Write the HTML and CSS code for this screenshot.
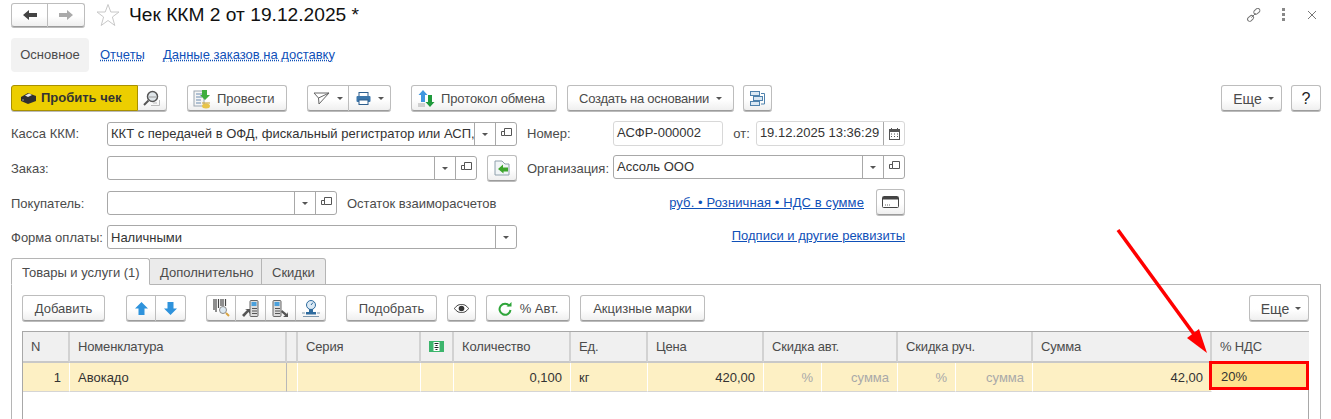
FILE: index.html
```html
<!DOCTYPE html>
<html lang="ru">
<head>
<meta charset="utf-8">
<title>Чек ККМ 2</title>
<link rel="stylesheet" href="styles.css">
</head>
<body>
<svg class="defs" width="0" height="0" aria-hidden="true">
  <symbol id="open" viewBox="0 0 11 11"><path d="M3.500 7.500H.5V3.500H3.500M3.500 .5h7v7h-7z" fill="none" stroke="#555" stroke-width="1"/></symbol>
</svg>
<div class="page">
  <header class="titlebar">
    <div class="btn-group nav">
      <button class="btn seg"><svg width="14" height="10" viewBox="0 0 14 10"><path d="M0 5 6 0V3H14V7H6V10z" fill="#444"/></svg></button>
      <button class="btn seg"><svg width="14" height="10" viewBox="0 0 14 10"><path d="M14 5 8 0V3H0V7H8V10z" fill="#aaa"/></svg></button>
    </div>
    <svg class="star" width="24" height="24" viewBox="0 0 24 24"><path d="M12 1.500 14.800 9H23L16.400 14 18.800 22.500 12 17.500 5.200 22.500 7.600 14 1 9H9.200z" fill="none" stroke="#c8c8c8"/></svg>
    <h1 class="title">Чек ККМ 2 от 19.12.2025 *</h1>
    <div class="window-tools">
      <svg width="15" height="15" viewBox="0 0 18 18"><g fill="none" stroke="#777" stroke-width="1.200"><rect x="9" y="1.500" width="8" height="5" rx="2.500" transform="rotate(-42 13 4)"/><rect x="1.500" y="10" width="8" height="5" rx="2.500" transform="rotate(-42 5.500 12.500)"/><path d="M6.500 11.500 11.500 6.500"/></g></svg>
      <svg width="4" height="14" viewBox="0 0 4 14"><g fill="#888"><rect x="0" y="0" width="3" height="3"/><rect x="0" y="5" width="3" height="3"/><rect x="0" y="10" width="3" height="3"/></g></svg>
      <svg width="10" height="10" viewBox="0 0 10 10"><path d="M1 1 9 9M9 1 1 9" stroke="#777" fill="none"/></svg>
    </div>
  </header>

  <nav class="pages">
    <span class="page-tab active">Основное</span>
    <a class="page-tab link">Отчеты</a>
    <a class="page-tab link">Данные заказов на доставку</a>
  </nav>

  <div class="toolbar main-toolbar">
    <div class="btn-group">
      <button class="btn primary"><svg width="17" height="12" viewBox="0 0 17 12"><path d="M1 5 8 1 16 4V9L8 12 1 9z" fill="#2f2f2f"/><path d="M5 3.500 9 1.500 12 3 8 5z" fill="#e8e8e8"/><circle cx="3" cy="8" r="1" fill="#777"/></svg>Пробить чек</button>
      <button class="btn seg search"><svg width="18" height="18" viewBox="0 0 18 18"><path d="M8 15.500H16.500V10" fill="none" stroke="#bbb"/><path d="M10 13h4" stroke="#bbb"/><circle cx="9.500" cy="6.500" r="5" fill="#dfe6ea" stroke="#555" stroke-width="1.500"/><path d="M6 7H13" stroke="#999"/><path d="M5.500 10.500 1 15" stroke="#555" stroke-width="2"/></svg></button>
    </div>
    <button class="btn w100"><svg width="19" height="20" viewBox="0 0 19 20"><rect x="1" y="2" width="10" height="15" fill="#f5f5f5" stroke="#9aa5b0"/><path d="M3 5h6M3 8h6M3 11h5M3 14h5" stroke="#6a8cb0"/><path d="M9 1h5v5h3l-5 5-5-5h2z" fill="#3fae3f"/><ellipse cx="13" cy="17" rx="4" ry="2.500" fill="#e8c44a"/><path d="M9 14h8" stroke="#c9a02a"/></svg>Провести</button>
    <div class="btn-group">
      <button class="btn seg split"><svg width="17" height="13" viewBox="0 0 17 13"><path d="M1 1H16L6 12 5.500 6z M5.500 6 16 1" fill="none" stroke="#666"/></svg><i class="caret"></i></button>
      <button class="btn seg split"><svg width="15" height="13" viewBox="0 0 15 13"><rect x="3" y="0.500" width="9" height="4" fill="#fff" stroke="#2e5f8e"/><rect x="0.500" y="4" width="14" height="6" rx="1" fill="#3d77ab"/><rect x="3" y="8" width="9" height="4.500" fill="#fff" stroke="#2e5f8e"/></svg><i class="caret"></i></button>
    </div>
    <button class="btn proto"><svg width="17" height="17" viewBox="0 0 17 17"><path d="M5 0 9.500 5H7V12H3V5H.5z" fill="#3f97e0"/><path d="M12 17 7.500 12H10V5H14V12H16.500z" fill="#1f9a3c"/><path d="M0 14H7M0 16H7" stroke="#aaa"/></svg>Протокол обмена</button>
    <button class="btn create">Создать на основании<i class="caret"></i></button>
    <button class="btn icon-btn"><svg width="15" height="15" viewBox="0 0 15 15"><g fill="#dbe8f3" stroke="#4f82ad"><rect x="0.500" y="0.500" width="9" height="4"/><rect x="3.500" y="5.500" width="9" height="4"/><rect x="0.500" y="10.500" width="9" height="4"/></g><path d="M11 2.500H14.500V13H11" fill="none" stroke="#4f82ad"/></svg></button>
    <div class="spacer"></div>
    <button class="btn more">Еще<i class="caret"></i></button>
    <button class="btn help">?</button>
  </div>

  <section class="form">
    <div class="form-left">
      <div class="row r1">
        <label class="lbl">Касса ККМ:</label>
        <div class="field w410"><span class="value">ККТ с передачей в ОФД, фискальный регистратор или АСП,</span><span class="fbtn"><i class="caret"></i></span><span class="fbtn"><svg class="open"><use href="#open"/></svg></span></div>
      </div>
      <div class="row r2">
        <label class="lbl">Заказ:</label>
        <div class="field w370"><span class="value"></span><span class="fbtn"><i class="caret"></i></span><span class="fbtn"><svg class="open"><use href="#open"/></svg></span></div>
        <button class="btn back"><svg width="17" height="16" viewBox="0 0 17 16"><path d="M1 1H8L11 4H15V15H1z" fill="#f1f5f7" stroke="#8fa0ac"/><path d="M4 9 9 4.500V7.500H14V11.500H9.500V13.500z" fill="#3da52c"/></svg></button>
      </div>
      <div class="row r3">
        <label class="lbl">Покупатель:</label>
        <div class="field w230"><span class="value"></span><span class="fbtn"><i class="caret"></i></span><span class="fbtn"><svg class="open"><use href="#open"/></svg></span></div>
        <span class="balance">Остаток взаиморасчетов</span>
      </div>
      <div class="row r4">
        <label class="lbl">Форма оплаты:</label>
        <div class="field w410"><span class="value">Наличными</span><span class="fbtn"><i class="caret"></i></span></div>
      </div>
    </div>
    <div class="form-right">
      <div class="row rr1">
        <label class="lbl lbl-r">Номер:</label>
        <div class="field readonly w110"><span class="value">АСФР-000002</span></div>
        <label class="lbl lbl-from">от:</label>
        <div class="field readonly w150"><span class="value">19.12.2025 13:36:29</span><span class="fbtn"><svg width="11" height="12" viewBox="0 0 11 12"><rect x=".5" y="1.500" width="10" height="10" fill="none" stroke="#555"/><rect x="1" y="2" width="9" height="2" fill="#555"/><path d="M2.500 0V2M8.500 0V2M2 6h1M5 6h1M8 6h1M2 8.500h1M5 8.500h1M8 8.500h1" stroke="#555"/></svg></span></div>
      </div>
      <div class="row rr2">
        <label class="lbl lbl-r">Организация:</label>
        <div class="field w292"><span class="value">Ассоль ООО</span><span class="fbtn"><i class="caret"></i></span><span class="fbtn"><svg class="open"><use href="#open"/></svg></span></div>
      </div>
      <div class="row rr3">
        <a class="link">руб. • Розничная • НДС в сумме</a>
        <button class="btn card"><svg width="17" height="12" viewBox="0 0 17 12"><rect x=".5" y=".5" width="16" height="11" rx="1" fill="#fff" stroke="#444"/><rect x="1" y="1" width="15" height="2.500" fill="#444"/><path d="M3 9h1M5 9h1M7 9h1" stroke="#666"/></svg></button>
      </div>
      <div class="row rr4"><a class="link">Подписи и другие реквизиты</a></div>
    </div>
  </section>

  <div class="tabs">
    <span class="tab active">Товары и услуги (1)</span>
    <span class="tab t2">Дополнительно</span>
    <span class="tab t3">Скидки</span>
  </div>

  <section class="panel">
    <div class="toolbar panel-toolbar">
      <button class="btn add">Добавить</button>
      <div class="btn-group">
        <button class="btn seg small"><svg width="13" height="13" viewBox="0 0 13 13"><path d="M6.500 0 13 6.500H9.500V13H3.500V6.500H0z" fill="#2f93dc"/></svg></button>
        <button class="btn seg small"><svg width="13" height="13" viewBox="0 0 13 13"><path d="M6.500 13 13 6.500H9.500V0H3.500V6.500H0z" fill="#2f93dc"/></svg></button>
      </div>
      <div class="btn-group">
        <button class="btn seg small"><svg width="17" height="19" viewBox="0 0 17 19"><path d="M1 0V11M3 0V13M5.500 0V9M8 0V7M10 0V7M12.500 0V7" stroke="#444" stroke-width="1.200"/><circle cx="10" cy="11" r="3.500" fill="#dce9f2" stroke="#8a8a8a"/><path d="M13 14 16 17" stroke="#d9a441" stroke-width="2"/></svg></button>
        <button class="btn seg small"><svg width="17" height="18" viewBox="0 0 17 18"><rect x="8" y="0.500" width="8" height="16" rx="1" fill="#ddd" stroke="#666"/><rect x="9.500" y="2" width="5" height="4" fill="#4aa0dc"/><path d="M10 8.500h5M10 11h5M10 13.500h5" stroke="#555"/><path d="M0 15 5 10 3 9H8V14L6.500 12 2 17z" fill="#555"/></svg></button>
        <button class="btn seg small"><svg width="17" height="18" viewBox="0 0 17 18"><rect x="1" y="0.500" width="8" height="16" rx="1" fill="#ddd" stroke="#666"/><rect x="2.500" y="2" width="5" height="4" fill="#4aa0dc"/><path d="M3 8.500h5M3 11h5M3 13.500h5" stroke="#555"/><path d="M10 10 15 14 16 12V17H11L13 15.500 9 12z" fill="#555"/></svg></button>
        <button class="btn seg small"><svg width="18" height="18" viewBox="0 0 18 18"><circle cx="9" cy="5" r="4.500" fill="#dbe9f4" stroke="#2e6b9e"/><path d="M9 5 11 2.500" stroke="#2e6b9e"/><rect x="7" y="9" width="4" height="3" fill="#2e6b9e"/><rect x="4" y="12" width="10" height="2.500" fill="#2e6b9e"/><path d="M0 13H3M15 13H18M1 16.500H17" stroke="#7e98ad"/></svg></button>
      </div>
      <button class="btn pick">Подобрать</button>
      <button class="btn eye"><svg width="15" height="9" viewBox="0 0 15 9"><path d="M.5 4.500C3 1 5 .5 7.500 .5S12 1 14.500 4.500C12 8 10 8.500 7.500 8.500S3 8 .5 4.500z" fill="#fff" stroke="#333"/><circle cx="7.500" cy="4.500" r="2.800" fill="#333"/></svg></button>
      <button class="btn auto"><svg width="14" height="14" viewBox="0 0 14 14"><path d="M11.500 4A5.500 5.500 0 1 0 12.500 8" fill="none" stroke="#2fa53a" stroke-width="2"/><path d="M8.500 4.500H13.500V0z" fill="#2fa53a"/></svg>% Авт.</button>
      <button class="btn excise">Акцизные марки</button>
      <div class="spacer"></div>
      <button class="btn more2">Еще<i class="caret"></i></button>
    </div>

    <div class="grid-wrap">
      <div class="grid">
        <div class="th">N</div>
        <div class="th">Номенклатура</div>
        <div class="th narrow"></div>
        <div class="th">Серия</div>
        <div class="th mark"><svg width="15" height="11" viewBox="0 0 15 11"><rect width="15" height="11" fill="#3cb56c"/><rect x="4.500" y="1" width="6" height="9" fill="#fff"/><path d="M5.500 2.500h4M6.500 4.500h2M5.500 6.500h4M6.500 8.500h2" stroke="#222" stroke-width="1.200"/></svg></div>
        <div class="th">Количество</div>
        <div class="th">Ед.</div>
        <div class="th">Цена</div>
        <div class="th span2">Скидка авт.</div>
        <div class="th span2">Скидка руч.</div>
        <div class="th">Сумма</div>
        <div class="th">% НДС</div>

        <div class="td num">1</div>
        <div class="td name">Авокадо</div>
        <div class="td narrow"></div>
        <div class="td"></div>
        <div class="td"></div>
        <div class="td num">0,100</div>
        <div class="td">кг</div>
        <div class="td num">420,00</div>
        <div class="td num hint">%</div>
        <div class="td num hint">сумма</div>
        <div class="td num hint">%</div>
        <div class="td num hint">сумма</div>
        <div class="td num">42,00</div>
        <div class="td current">20%</div>
      </div>
    </div>
  </section>

  <svg class="arrow" width="110" height="140" viewBox="0 0 110 140"><path d="M3 2 81 109" stroke="#f00" stroke-width="3.500" fill="none"/><path d="M92 125 72 110 84 101z" fill="#f00"/></svg>
</div>
</body>
</html>
```
FILE: styles.css
```css
* { box-sizing: border-box; }
html, body { margin: 0; height: 419px; overflow: hidden; background: #fff; }
body { font: 13px/16px "Liberation Sans", Arial, sans-serif; color: #4b4b4b; }
.defs { position: absolute; }
.page { position: relative; width: 1331px; height: 419px; padding: 3px 10px 0 11px; overflow: hidden; }

.titlebar { display: flex; align-items: center; height: 24px; }
.title { margin: 0 0 0 9px; font-size: 19.2px; font-weight: 400; line-height: 24px; color: #111; }
.star { margin-left: 11px; }
.window-tools { margin-left: auto; display: flex; align-items: center; gap: 21px; padding-right: 4px; }

.btn { display: inline-flex; align-items: center; justify-content: center; height: 26px; padding: 0 12px; gap: 8px;
  font: inherit; color: #4b4b4b; background: linear-gradient(#fff 55%, #efefef); border: 1px solid #bdbdbd; border-bottom-color: #9c9c9c; border-radius: 3px; box-shadow: 0 1px 0 #bbb; }
.toolbar .btn { padding-top: 1px; }
.btn-group { display: inline-flex; }
.btn-group .btn { border-radius: 0; border-left-width: 0; }
.btn-group .btn:first-child { border-radius: 3px 0 0 3px; border-left-width: 1px; }
.btn-group .btn:last-child { border-radius: 0 3px 3px 0; }
.seg { padding: 0; }
.nav { height: 24px; }
.nav .btn { width: 37px; height: 24px; }
.caret { display: inline-block; width: 0; height: 0; border: 3px solid transparent; border-top: 3px solid #555; border-bottom: 0; }

.pages { display: flex; align-items: center; height: 34px; margin-top: 11px; }
.page-tab { height: 34px; line-height: 34px; }
.page-tab.active { width: 78px; background: #f2f2f2; border-radius: 4px; text-align: center; color: #4b4b4b; }
.page-tab.link { margin-left: 11px; text-decoration-style: dotted; }
.page-tab.link + .link { margin-left: 18px; }
.link { color: #0f50b8; text-decoration: underline; }

.toolbar { display: flex; align-items: center; }
.spacer { flex: 1; }
.main-toolbar { margin-top: 13px; gap: 10px; }
.main-toolbar > .btn-group:nth-child(1) { margin-right: 10px; }
.main-toolbar > .btn-group:nth-child(3) { margin: 0 10px; }
.btn-group .primary { width: 127px; background: #ecce00; border: 1px solid #a89000; border-radius: 3px 0 0 3px; color: #333; font-weight: 700; gap: 4px; padding: 0 8px; justify-content: flex-start; }
.search { width: 29px; }
.w100 { width: 100px; justify-content: flex-start; padding: 0 0 0 5px; gap: 5px; }
.split { width: 42px; gap: 7px; }
.proto { width: 146px; padding: 0 6px; gap: 6px; flex: none; justify-content: flex-start; letter-spacing: -.1px; }
.create { width: 167px; gap: 7px; padding: 0; letter-spacing: -.25px; }
.icon-btn { width: 29px; padding: 0; margin-left: -1px; }
.more { width: 61px; padding: 0 0 0 4px; gap: 6px; font-size: 14px; }
.help { width: 30px; padding: 0; margin-left: -1px; font-size: 16px; color: #222; }

.form { display: flex; margin-top: 10px; height: 138px; }
.form-left { width: 516px; }
.form-right { width: 378px; }
.row { display: flex; align-items: center; }
.r1 { height: 24px; margin-top: 1px; }
.r2 { height: 24px; margin-top: 10px; }
.r3 { height: 24px; margin-top: 11px; }
.r4 { height: 24px; margin-top: 10px; }
.lbl { width: 96px; flex: none; }
.r2 .lbl, .r3 .lbl, .r4 .lbl, .balance { padding-top: 2px; }
.rr2 .lbl { padding-top: 4px; }
.field { display: flex; height: 100%; background: #fff; border: 1px solid #a8a8a8; border-radius: 3px; color: #333; }
.value { flex: 1; min-width: 0; padding: 3px; white-space: nowrap; overflow: hidden; }
.r4 .value { padding-top: 4px; }
.fbtn { width: 21px; flex: none; display: flex; align-items: center; justify-content: center; border-left: 1px solid #a8a8a8; }
.open { width: 11px; height: 11px; margin-top: -2px; }
.w410 { width: 410px; }
.w370 { width: 370px; }
.w230 { width: 230px; }
.w292 { width: 292px; }
.w110 { width: 111px; }
.w150 { width: 150px; }
.readonly { border-color: #d8d8d8; }
.back { width: 30px; padding: 0; margin-left: 10px; }
.balance { margin-left: 10px; }
.rr1 { height: 25px; }
.rr2 { height: 24px; margin-top: 9px; }
.rr3 { height: 26px; margin-top: 10px; justify-content: flex-end; gap: 12px; }
.rr3 .link { margin-top: 2px; letter-spacing: .1px; }
.rr4 { margin-top: 13px; justify-content: flex-end; }
.lbl-r { width: 86px; }
.lbl-from { width: auto; margin: 0 6px 0 10px; }
.card { width: 29px; padding: 0; }

.tabs { display: flex; height: 27px; margin-top: -1px; position: relative; }
.tab { height: 27px; line-height: 27px; padding: 0 10px; background: #ebebeb; border: 1px solid #b5b5b5; border-left: 0; color: #4b4b4b; white-space: nowrap; }
.tab.active { width: 139px; background: #fff; border-left: 1px solid #b5b5b5; border-bottom-color: #fff; border-radius: 3px 3px 0 0; position: relative; z-index: 1; }
.t2 { width: 112px; }
.t3 { width: 64px; border-radius: 0 3px 0 0; }

.panel { height: 140px; margin-top: -1px; padding: 10px 11px 0 10px; border: 1px solid #b5b5b5; border-bottom: 0; }
.panel-toolbar { gap: 20px; }
.add { width: 83px; padding: 0; margin-right: 1px; }
.small { width: 30px; }
.pick { width: 91px; padding: 0; }
.eye { width: 29px; padding: 0; margin-left: -10px; }
.auto { width: 84px; padding: 0; margin-left: -10px; gap: 8px; }
.excise { width: 125px; padding: 0; margin-left: -10px; }
.more2 { width: 60px; padding: 0 0 0 4px; gap: 6px; font-size: 14px; }

.grid-wrap { margin-top: 10px; height: 90px; border: 1px solid #a8a8a8; border-bottom: 0; }
.grid { display: grid; grid-template-columns: 47px 217px 11px 123px 33px 117px 77px 116px 58px 76px 58px 77px 179px 97px; grid-template-rows: 31px 29px; }
.th { display: flex; align-items: center; padding: 0 8px; background: #f0f0f0; border-right: 2px solid #d2d2d2; border-bottom: 2px solid #c8c8c8; letter-spacing: -.15px; }
.th:nth-child(12) { border-right: 0; }
.span2 { grid-column: span 2; }
.mark { justify-content: center; padding: 0; }
.th.narrow { padding: 0; }
.td { display: flex; align-items: center; padding: 1px 8px 0; background: #fdf0c4; border-right: 1px solid #fff; border-bottom: 1px solid #d5d5d5; color: #333; }
.td.narrow { padding: 0; }
.td.name { border-right-color: #b8b8b8; }
.num { justify-content: flex-end; }
.td.hint { color: #a9a9a9; }
.td.current { margin: -2px 0 2px -3px; padding: 3px 0 0 9px; background: #ffe28c; border: 3px solid #f00; position: relative; }

.arrow { position: absolute; left: 1115px; top: 228px; }
```
